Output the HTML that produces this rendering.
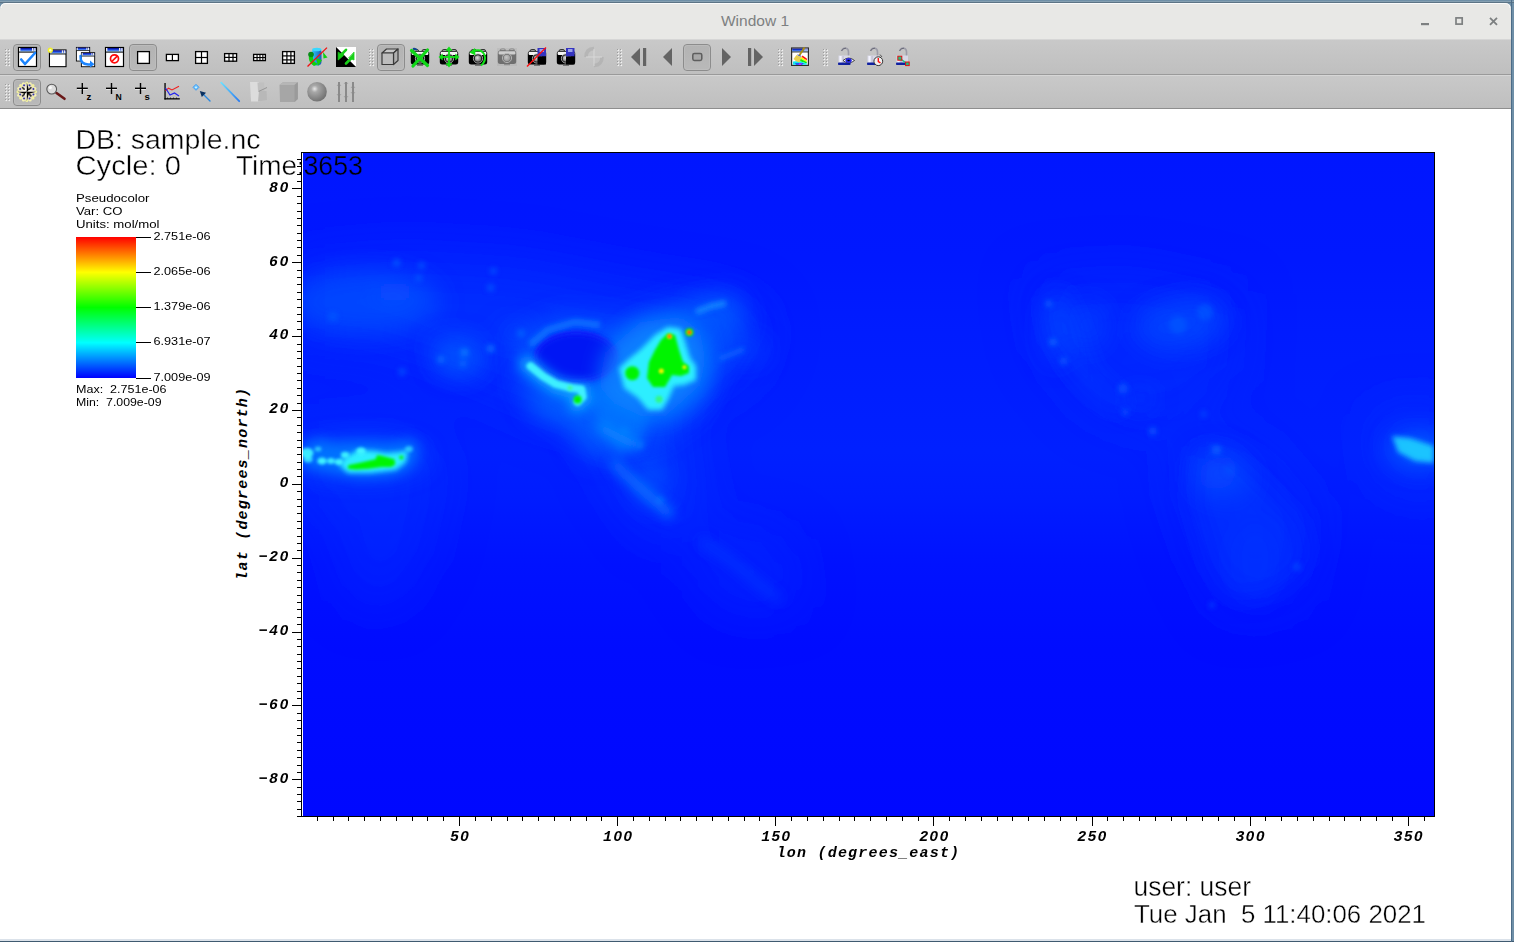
<!DOCTYPE html>
<html><head><meta charset="utf-8">
<style>
html,body{margin:0;padding:0;width:1514px;height:942px;overflow:hidden;background:#6e8ea6;}
svg{position:absolute;left:0;top:0;display:block}
text{font-family:"Liberation Sans",sans-serif}
.thin{stroke:#fff;stroke-width:0.4px}
.thinb{stroke:#0018ff;stroke-width:0.4px}
.ax text{font-family:"Liberation Mono",monospace;font-weight:bold;font-style:italic}
</style></head><body>
<svg width="1514" height="942" viewBox="0 0 1514 942">
<defs>
  <linearGradient id="tbg" x1="0" y1="0" x2="0" y2="1">
    <stop offset="0" stop-color="#c9c9c9"/><stop offset="1" stop-color="#bfbfbf"/>
  </linearGradient>
  <linearGradient id="cbar" x1="0" y1="1" x2="0" y2="0">
    <stop offset="0" stop-color="#0000ff"/><stop offset="0.25" stop-color="#00ffff"/>
    <stop offset="0.5" stop-color="#00ff00"/><stop offset="0.75" stop-color="#ffff00"/>
    <stop offset="1" stop-color="#ff0000"/>
  </linearGradient>
</defs>
<!-- desktop/border -->
<rect x="0" y="0" width="1514" height="942" fill="#6f8fa7"/>
<!-- window -->
<rect x="0" y="1" width="1514" height="1" fill="#86a0b2"/>
<rect x="0" y="2" width="1514" height="1" fill="#5c7486"/>
<path d="M0 9 Q0 3 6 3 L1505 3 Q1511 3 1511 9 L1511 939 L0 939 Z" fill="#e8e8e6"/>
<path d="M1 8 Q1 3.5 6 3.5 L1505 3.5 Q1510 3.5 1510 8" fill="none" stroke="#fbfbfb" stroke-width="1"/>
<text x="755" y="26" text-anchor="middle" font-size="15.5" fill="#7d8081">Window 1</text>
<!-- window controls -->
<rect x="1421" y="23" width="8" height="2.2" fill="#7d8081"/>
<rect x="1456" y="17.9" width="6.2" height="6.2" fill="none" stroke="#7d8081" stroke-width="1.7"/>
<path d="M1490 17.8 L1497 24.8 M1497 17.8 L1490 24.8" stroke="#7d8081" stroke-width="1.8"/>
<!-- toolbars -->
<rect x="0" y="39" width="1511" height="35" fill="url(#tbg)"/>
<rect x="0" y="39" width="1511" height="1" fill="#d6d6d6"/>
<rect x="0" y="74" width="1511" height="1" fill="#9a9a9a"/>
<rect x="0" y="75" width="1511" height="33" fill="url(#tbg)"/>
<rect x="0" y="75" width="1511" height="1" fill="#d6d6d6"/>
<rect x="0" y="108" width="1511" height="1" fill="#8e8e8e"/>
<!-- content -->
<rect x="0" y="109" width="1511" height="830" fill="#ffffff"/>
<rect x="0" y="939" width="1511" height="2" fill="#dbe2ea"/>
<rect x="0" y="941" width="1514" height="1" fill="#3f5a70"/>
<rect x="1511" y="0" width="1" height="942" fill="#4c6c88"/>
<g id="toolbar">
<defs>
  <linearGradient id="tbar" x1="0" y1="0" x2="0" y2="1">
    <stop offset="0" stop-color="#00008c"/><stop offset="0.5" stop-color="#2050e8"/><stop offset="1" stop-color="#80c0ff"/>
  </linearGradient>
  <linearGradient id="pbtn" x1="0" y1="0" x2="0" y2="1">
    <stop offset="0" stop-color="#b3b3b3"/><stop offset="1" stop-color="#b9b9b9"/>
  </linearGradient>
  <radialGradient id="lensg" cx="0.4" cy="0.4" r="0.6">
    <stop offset="0" stop-color="#e0e0e0"/><stop offset="1" stop-color="#707070"/>
  </radialGradient>
  <radialGradient id="sphg" cx="0.38" cy="0.35" r="0.7">
    <stop offset="0" stop-color="#e8e8e8"/><stop offset="0.25" stop-color="#a8a8a8"/><stop offset="1" stop-color="#6e6e6e"/>
  </radialGradient>
  <linearGradient id="lineg" x1="0" y1="0" x2="1" y2="1">
    <stop offset="0" stop-color="#6ce0ff"/><stop offset="1" stop-color="#2a7cf0"/>
  </linearGradient>
  <linearGradient id="cylg" x1="0" y1="0" x2="1" y2="0">
    <stop offset="0" stop-color="#30c8f8"/><stop offset="1" stop-color="#1a58b8"/>
  </linearGradient>
  <g id="grip">
<rect x="0.6" y="0.6" width="1.5" height="1.5" fill="#f2f2f2"/><rect x="0" y="0" width="1" height="1" fill="#9c9c9c"/>
<rect x="3.6" y="0.6" width="1.5" height="1.5" fill="#f2f2f2"/><rect x="3" y="0" width="1" height="1" fill="#9c9c9c"/>
<rect x="0.6" y="3.6" width="1.5" height="1.5" fill="#f2f2f2"/><rect x="0" y="3" width="1" height="1" fill="#9c9c9c"/>
<rect x="3.6" y="3.6" width="1.5" height="1.5" fill="#f2f2f2"/><rect x="3" y="3" width="1" height="1" fill="#9c9c9c"/>
<rect x="0.6" y="6.6" width="1.5" height="1.5" fill="#f2f2f2"/><rect x="0" y="6" width="1" height="1" fill="#9c9c9c"/>
<rect x="3.6" y="6.6" width="1.5" height="1.5" fill="#f2f2f2"/><rect x="3" y="6" width="1" height="1" fill="#9c9c9c"/>
<rect x="0.6" y="9.6" width="1.5" height="1.5" fill="#f2f2f2"/><rect x="0" y="9" width="1" height="1" fill="#9c9c9c"/>
<rect x="3.6" y="9.6" width="1.5" height="1.5" fill="#f2f2f2"/><rect x="3" y="9" width="1" height="1" fill="#9c9c9c"/>
<rect x="0.6" y="12.6" width="1.5" height="1.5" fill="#f2f2f2"/><rect x="0" y="12" width="1" height="1" fill="#9c9c9c"/>
<rect x="3.6" y="12.6" width="1.5" height="1.5" fill="#f2f2f2"/><rect x="3" y="12" width="1" height="1" fill="#9c9c9c"/>
<rect x="0.6" y="15.6" width="1.5" height="1.5" fill="#f2f2f2"/><rect x="0" y="15" width="1" height="1" fill="#9c9c9c"/>
<rect x="3.6" y="15.6" width="1.5" height="1.5" fill="#f2f2f2"/><rect x="3" y="15" width="1" height="1" fill="#9c9c9c"/>
</g>
  <g id="pressed">
    <rect x="0.5" y="0.5" width="27" height="26" rx="3.5" fill="url(#pbtn)" stroke="#8c8c8c" stroke-width="1"/>
    <rect x="1.5" y="1.5" width="25" height="24" rx="2.5" fill="none" stroke="#c2c2c2" stroke-width="0.8" opacity="0.7"/>
  </g>
  <g id="win">
    <!-- 19x20 window: origin top-left -->
    <rect x="0.5" y="0.5" width="18" height="19" fill="#fff" stroke="#000" stroke-width="1.2"/>
    <rect x="1" y="1" width="17" height="3.6" fill="url(#tbar)"/>
    <rect x="1" y="1" width="1.4" height="3.6" fill="#e8e8e8"/>
    <rect x="14" y="1" width="1.4" height="3.6" fill="#e8e8e8"/>
    <rect x="16.2" y="1" width="1.4" height="3.6" fill="#e8e8e8"/>
    <rect x="0.5" y="4.6" width="18" height="1" fill="#000"/>
  </g>
  <g id="camera">
    <!-- 20 wide, origin top-left at y of top bumps -->
    <path d="M3 2.5 Q3 1 5 1 L7 1 Q8.5 1 8.5 2.5 Z M12 2.5 Q12 1 14 1 L16 1 Q17.5 1 17.5 2.5 Z" fill="#fff" stroke="#202020" stroke-width="0.9"/>
    <rect x="0.8" y="2.5" width="18.4" height="13.5" rx="2.5" fill="#000"/>
    <rect x="1.6" y="3.2" width="16.8" height="3.3" rx="1.2" fill="#f4f4f4"/>
    <circle cx="10" cy="10" r="4.6" fill="#111" stroke="#bcbcbc" stroke-width="0.9"/>
    <circle cx="10" cy="10" r="3.2" fill="url(#lensg)"/>
    <rect x="7" y="16" width="6" height="1.2" fill="#555"/>
  </g>
</defs>
<use href="#grip" x="5" y="49"/>
<use href="#pressed" x="13" y="44"/>
<use href="#win" x="18" y="47"/>
<path d="M21.2 59.5 L25 64 L35 53" fill="none" stroke="#1a84ff" stroke-width="2.6" stroke-linecap="round" stroke-linejoin="round"/>
<!-- new window -->
<g transform="translate(49,49.5) scale(0.92,0.88)"><use href="#win"/></g>
<circle cx="50.3" cy="50.2" r="2.6" fill="#f2f22a"/>
<circle cx="50.3" cy="50.2" r="1.2" fill="#ffffc8"/>
<!-- clone window -->
<g transform="translate(76,47) scale(0.74,0.72)"><use href="#win"/></g>
<g transform="translate(81,52.3) scale(0.74,0.74)"><use href="#win"/></g>
<path d="M80.5 56 Q80 64 88 64.5 L91 64.5" fill="none" stroke="#1a84ff" stroke-width="2.4" stroke-linecap="round"/>
<path d="M90 60.5 L94.5 64.3 L90 67.5 Z" fill="#1a84ff"/>
<!-- delete window -->
<use href="#win" x="105" y="47"/>
<circle cx="114.5" cy="58.8" r="4" fill="none" stroke="#ff0a0a" stroke-width="1.7"/>
<path d="M111.8 61.5 L117.2 56.1" stroke="#ff0a0a" stroke-width="1.7"/>
<!-- layouts -->
<use href="#pressed" x="129" y="44"/>
<g fill="#fff" stroke="#000" stroke-width="1.3">
  <rect x="137.6" y="51.6" width="11.8" height="11.8"/>
  <rect x="166.4" y="54.4" width="12" height="6.2"/>
  <rect x="195.6" y="51.6" width="11.8" height="11.8"/>
  <rect x="224.6" y="53.6" width="12" height="7.6"/>
  <rect x="253.6" y="54.4" width="11.8" height="6.2"/>
  <rect x="282.6" y="51.6" width="11.8" height="11.8"/>
</g>
<g fill="#000">
  <rect x="171.8" y="54" width="1.2" height="7"/>
  <rect x="200.9" y="51" width="1.2" height="13"/><rect x="195" y="56.9" width="13" height="1.2"/>
  <rect x="228.4" y="53" width="1.2" height="8.8"/><rect x="232.4" y="53" width="1.2" height="8.8"/><rect x="224" y="56.8" width="13" height="1.2"/>
  <rect x="256.5" y="54" width="1.1" height="7"/><rect x="259.4" y="54" width="1.1" height="7"/><rect x="262.3" y="54" width="1.1" height="7"/><rect x="253" y="57" width="13" height="1.1"/>
  <rect x="286.3" y="51" width="1.2" height="13"/><rect x="290.3" y="51" width="1.2" height="13"/><rect x="282" y="55.3" width="13" height="1.2"/><rect x="282" y="59.3" width="13" height="1.2"/>
</g>
<!-- spin icon -->
<rect x="312" y="48.5" width="9.5" height="17" rx="4" fill="url(#cylg)"/>
<ellipse cx="316.8" cy="49.5" rx="4.7" ry="1.8" fill="#38d8ff"/>
<g fill="#10d010">
  <path d="M309 55 Q307.5 62 314 66 L318 64 Q312 61 313 56 Z"/>
  <circle cx="311" cy="54.5" r="2.8" fill="#0a8a1a"/>
  <path d="M323 52 L327.5 57.5 L323.5 58.5 Z"/>
  <path d="M316 58 L322 60 L318 66 Z"/>
</g>
<path d="M307.5 66.5 L327 47.6" stroke="#f01010" stroke-width="1.3"/>
<!-- black/white swap -->
<path d="M336 47 L356 47 L356 67 Z" fill="#fff"/>
<path d="M336 47 L356 67 L336 67 Z" fill="#000"/>
<g stroke="#18d018" stroke-width="2.6" fill="#18d018" stroke-linecap="round">
  <path d="M346 49.8 L341 55" fill="none"/>
  <path d="M338.2 52.5 L338.2 60 L343.5 55.5 Z" stroke-width="0.8" stroke-linejoin="round"/>
  <path d="M346 63.5 L351 58.5" fill="none"/>
  <path d="M354 52.5 L354 60 L349 58 Z" stroke-width="0.8" stroke-linejoin="round"/>
</g>
<!-- grip 2 -->
<use href="#grip" x="369" y="49"/>
<use href="#pressed" x="377" y="44"/>
<!-- cube -->
<g fill="none" stroke="#3a3a3a" stroke-width="1.2" stroke-linejoin="round">
  <path d="M382 53 L386.5 49 L398 49 L393.5 53 Z" fill="#c8c8c8"/>
  <path d="M393.5 53 L398 49 L398 60.5 L393.5 64.5 Z" fill="#b0b0b0"/>
  <rect x="382" y="53" width="11.5" height="11.5" fill="#bdbdbd"/>
</g>
<!-- cameras -->
<use href="#camera" x="410" y="48.5"/>
<g stroke="#10d818" stroke-width="3.2" stroke-linecap="round">
  <path d="M411.5 50.5 L427.5 65.5"/><path d="M427.5 50 L413 66"/>
</g>
<path d="M413 49 Q415 48 417 50" stroke="#104890" stroke-width="2" fill="none"/>
<use href="#camera" x="439" y="48.5"/>
<g fill="#10e018" stroke="#10e018">
  <path d="M449 49 L449 65.5" stroke-width="1.8"/>
  <path d="M440.5 57 L457.5 57" stroke-width="1.8"/>
  <path d="M449 46.8 L452 50.5 L446 50.5 Z" stroke-width="0.5"/>
  <path d="M449 67.2 L452 63.5 L446 63.5 Z" stroke-width="0.5"/>
  <path d="M438.8 57 L442.5 54 L442.5 60 Z" stroke-width="0.5"/>
  <path d="M459.2 57 L455.5 54 L455.5 60 Z" stroke-width="0.5"/>
</g>
<use href="#camera" x="468" y="48.5"/>
<path d="M473 51.5 Q481 48 484.5 55 Q486.5 61 481 65.5" fill="none" stroke="#10e018" stroke-width="2"/>
<path d="M469.5 52.5 L475 48 L475.5 55.5 Z" fill="#10e018"/>
<g opacity="0.55"><use href="#camera" x="497" y="48"/></g>
<rect x="497" y="48" width="20" height="18" fill="#a8a8a8" opacity="0.3"/>
<use href="#camera" x="527" y="48.5"/>
<rect x="537.5" y="48" width="8.5" height="8.5" fill="#3434c0"/>
<rect x="539.5" y="49" width="4.5" height="3" fill="#9aa0e8"/>
<rect x="537.5" y="56.5" width="8.5" height="8" fill="#000"/>
<path d="M527 66.6 L546 47.4" stroke="#ff1010" stroke-width="1.4"/>
<use href="#camera" x="556" y="48.5"/>
<rect x="566" y="48" width="8.5" height="8.5" fill="#3434c0"/>
<rect x="568" y="49" width="4.5" height="3" fill="#9aa0e8"/>
<rect x="566" y="56.5" width="8.5" height="8" fill="#000"/>
<!-- disabled crosshair -->
<g opacity="0.5">
  <path d="M586 57 Q586 49 594 48.5 M602 57 Q602 65 594 65.5" stroke="#a8a8a8" stroke-width="3.5" fill="none"/>
  <path d="M594 49 L594 66 M586 57 L602 57" stroke="#f0f0f0" stroke-width="0.9"/>
</g>
<!-- grip 3 -->
<use href="#grip" x="617" y="49"/>
<!-- animation -->
<g fill="#646464">
  <path d="M631 57 L640 48 L640 66 Z"/><rect x="643" y="48" width="3.2" height="18"/>
  <path d="M663 57 L672 48 L672 66 Z"/>
  <path d="M731 57 L722 48 L722 66 Z"/>
  <rect x="748" y="48" width="3.2" height="18"/><path d="M763 57 L754 48 L754 66 Z"/>
</g>
<use href="#pressed" x="683" y="44"/>
<rect x="692.8" y="53.4" width="9" height="7" rx="1.6" fill="#a8a8a8" stroke="#5e5e5e" stroke-width="1.5"/>
<!-- grip 4 -->
<use href="#grip" x="778" y="49"/>
<!-- color table icon -->
<rect x="791.6" y="48" width="16.8" height="17.4" fill="#fff" stroke="#2c2c2c" stroke-width="1.2"/>
<rect x="792.2" y="48.6" width="15.6" height="3" fill="url(#tbar)"/>
<rect x="804.5" y="48.6" width="1.1" height="3" fill="#e8e8e8"/><rect x="806.4" y="48.6" width="1.1" height="3" fill="#e8e8e8"/>
<rect x="791.6" y="51.5" width="16.8" height="0.9" fill="#1a1a1a"/>
<path d="M802 53 Q805 56 807.5 59 L807.5 64.5 L795 64.5 Q794 62 794 61" fill="none" stroke="url(#rainb)" stroke-width="0"/>
<g>
  <path d="M802.5 55.5 L806.8 58.5 L806.8 60.5 L801.5 57 Z" fill="#ff1010"/>
  <path d="M801.5 57 L806.8 60.5 L806.8 62 L800.5 58.8 Z" fill="#f8f800"/>
  <path d="M800.5 58.8 L806.8 62 L806.8 63.5 L799 61 Z" fill="#10f010"/>
  <path d="M793 61.5 L799 61 L806.8 63.5 L806.8 64.8 L793 64.8 Z" fill="#10e8f0"/>
  <path d="M795 63.2 L804 63.2 L802 64.8 L796 64.8 Z" fill="#2030ff"/>
  <path d="M799 63.5 L802 63.5 L801 64.8 L798.5 64.8 Z" fill="#ff10ff"/>
</g>
<path d="M804.5 47.5 L799 56" stroke="#b09010" stroke-width="1.8"/>
<path d="M796.5 55 L801.5 57 L799.5 62.5 Q796 62 793.5 59 Z" fill="#e8d050"/>
<path d="M797.5 54.8 L801.2 56.3" stroke="#5060c0" stroke-width="1"/>
<!-- grip 5 -->
<use href="#grip" x="823" y="49"/>
<!-- locks -->
<g id="lockbase">
</g>
</g>
<g id="toolbar2">
<defs>
  <g id="lock">
    <!-- origin at left-top of icon (approx 17x18) -->
    <path d="M3.5 4 Q5 0.8 8 1.2 Q10.5 1.8 10.5 5 L10.5 9" fill="none" stroke="#9c9ca8" stroke-width="1.6"/>
    <path d="M3.5 4 Q5 0.8 8 1.2" fill="none" stroke="#6a6a78" stroke-width="1"/>
    <rect x="0.5" y="8.5" width="11.5" height="8" fill="#d8d8e6"/>
    <rect x="1.5" y="9" width="2" height="7" fill="#f4f4ff"/>
    <rect x="4.5" y="9" width="1.2" height="7" fill="#c0c0d4"/>
    <rect x="0" y="15.5" width="12.5" height="2.6" rx="0.8" fill="#1020a0"/>
  </g>
</defs>
<use href="#lock" x="838" y="47"/>
<!-- eye -->
<path d="M843 60.5 Q848.5 55.5 854.5 60.5 Q848.5 65.5 843 60.5 Z" fill="#fff" stroke="#222" stroke-width="0.8"/>
<ellipse cx="848.6" cy="60.5" rx="3.2" ry="2.5" fill="#2828e0"/>
<ellipse cx="848.6" cy="60.5" rx="1.2" ry="0.8" fill="#000"/>
<use href="#lock" x="867" y="47"/>
<!-- clock -->
<circle cx="878.3" cy="61.2" r="4.4" fill="#f0f0f0" stroke="#333" stroke-width="1"/>
<path d="M878.3 58 L878.3 61.5 L880.5 62.8" stroke="#ff1010" stroke-width="1.4" fill="none"/>
<path d="M880 54.5 L882 57" stroke="#555" stroke-width="1"/>
<use href="#lock" x="896" y="47"/>
<path d="M900 58.5 L907.3 63.8" stroke="#20c080" stroke-width="1.5"/>
<rect x="897.8" y="56.2" width="4" height="4" fill="#20c080" stroke="#e01010" stroke-width="1"/>
<rect x="905.6" y="62" width="3.6" height="3.6" fill="#20c080" stroke="#e01010" stroke-width="1"/>

<!-- toolbar 2 -->
<use href="#grip" x="5" y="84"/>
<use href="#pressed" x="13" y="79"/>
<!-- compass -->
<g>
<circle cx="26.8" cy="91.8" r="9.2" fill="#e4dcc0"/>
<circle cx="26.80" cy="83.00" r="1.5" fill="#f2f0a0"/>
<circle cx="30.17" cy="83.67" r="1.5" fill="#f6f2b0"/>
<circle cx="33.02" cy="85.58" r="1.5" fill="#f2f0a0"/>
<circle cx="34.93" cy="88.43" r="1.5" fill="#f6f2b0"/>
<circle cx="35.60" cy="91.80" r="1.5" fill="#f2f0a0"/>
<circle cx="34.93" cy="95.17" r="1.5" fill="#f6f2b0"/>
<circle cx="33.02" cy="98.02" r="1.5" fill="#f2f0a0"/>
<circle cx="30.17" cy="99.93" r="1.5" fill="#f6f2b0"/>
<circle cx="26.80" cy="100.60" r="1.5" fill="#f2f0a0"/>
<circle cx="23.43" cy="99.93" r="1.5" fill="#f6f2b0"/>
<circle cx="20.58" cy="98.02" r="1.5" fill="#f2f0a0"/>
<circle cx="18.67" cy="95.17" r="1.5" fill="#f6f2b0"/>
<circle cx="18.00" cy="91.80" r="1.5" fill="#f2f0a0"/>
<circle cx="18.67" cy="88.43" r="1.5" fill="#f6f2b0"/>
<circle cx="20.58" cy="85.58" r="1.5" fill="#f2f0a0"/>
<circle cx="23.43" cy="83.67" r="1.5" fill="#f6f2b0"/>
<circle cx="29.56" cy="85.15" r="1" fill="#3838b0"/>
<circle cx="33.45" cy="89.04" r="1" fill="#3838b0"/>
<circle cx="33.45" cy="94.56" r="1" fill="#3838b0"/>
<circle cx="29.56" cy="98.45" r="1" fill="#3838b0"/>
<circle cx="24.04" cy="98.45" r="1" fill="#3838b0"/>
<circle cx="20.15" cy="94.56" r="1" fill="#3838b0"/>
<circle cx="20.15" cy="89.04" r="1" fill="#3838b0"/>
<circle cx="24.04" cy="85.15" r="1" fill="#3838b0"/>
<path d="M26.8 91.8 L31.40 87.20" stroke="#303030" stroke-width="1.6"/>
<path d="M26.8 91.8 L31.40 96.40" stroke="#303030" stroke-width="1.6"/>
<path d="M26.8 91.8 L22.20 96.40" stroke="#303030" stroke-width="1.6"/>
<path d="M26.8 91.8 L22.20 87.20" stroke="#303030" stroke-width="1.6"/>
<path d="M26.8 82.6 L24.8 89.8 L26.8 91.8 Z M17.6 91.8 L24.8 89.8 L26.8 91.8 Z M26.8 101.0 L24.8 93.8 L26.8 91.8 Z M36.0 91.8 L28.8 89.8 L26.8 91.8 Z" fill="#fbf8ee"/>
<path d="M26.8 82.6 L28.8 89.8 L26.8 91.8 Z M17.6 91.8 L24.8 93.8 L26.8 91.8 Z M26.8 101.0 L28.8 93.8 L26.8 91.8 Z M36.0 91.8 L28.8 93.8 L26.8 91.8 Z" fill="#000"/>
</g>
<!-- magnifier -->
<path d="M56.5 93 L64.5 98.8" stroke="#6a1818" stroke-width="2.6" stroke-linecap="round"/>
<circle cx="51.7" cy="89.1" r="4.9" fill="#dcdcdc" stroke="#585858" stroke-width="1.1"/>
<circle cx="50.3" cy="87.6" r="1.6" fill="#f8f8f8"/>
<!-- +z +N +S -->
<g fill="#000">
  <rect x="76.8" y="87.6" width="11" height="1.4"/><rect x="81.6" y="83" width="1.4" height="11"/>
  <rect x="106" y="87.6" width="11" height="1.4"/><rect x="110.8" y="83" width="1.4" height="11"/>
  <rect x="135" y="87.6" width="11" height="1.4"/><rect x="139.8" y="83" width="1.4" height="11"/>
</g>
<g fill="#fff" opacity="0.8">
  <rect x="77" y="89" width="4.6" height="0.8"/><rect x="83" y="89" width="4.6" height="0.8"/>
  <rect x="106.2" y="89" width="4.6" height="0.8"/><rect x="112.2" y="89" width="4.6" height="0.8"/>
  <rect x="135.2" y="89" width="4.6" height="0.8"/><rect x="141.2" y="89" width="4.6" height="0.8"/>
</g>
<text x="86.6" y="100.2" font-size="9.6" font-weight="bold" style="font-family:'Liberation Sans'">z</text>
<text x="115.6" y="100.2" font-size="8.6" font-weight="bold" style="font-family:'Liberation Sans'">N</text>
<text x="144.6" y="100.2" font-size="9.6" font-weight="bold" style="font-family:'Liberation Sans'">s</text>
<!-- curve icon -->
<g>
  <rect x="164.4" y="83" width="1.3" height="16.5" fill="#000"/>
  <rect x="164.4" y="98.2" width="15.4" height="1.3" fill="#000"/>
  <g fill="#000"><rect x="167" y="97.6" width="0.8" height="1"/><rect x="170" y="97.6" width="0.8" height="1"/><rect x="173" y="97.6" width="0.8" height="1"/><rect x="176" y="97.6" width="0.8" height="1"/></g>
  <path d="M165.5 90.8 L168.5 88.2 L172 90 L179 86.3" fill="none" stroke="#f02020" stroke-width="1.1"/>
  <path d="M165.5 88 L170 95 L174.5 93 L179 96" fill="none" stroke="#2020f0" stroke-width="1.1"/>
</g>
<!-- pick -->
<path d="M196 84.3 L199 87.3 L196 90.3 L193 87.3 Z" fill="#6cc8ff" stroke="#3890f0" stroke-width="0.8"/>
<circle cx="196" cy="87.3" r="0.9" fill="#e8f8ff"/>
<path d="M203 94 L210 101" stroke="#2a88e0" stroke-width="1.4" stroke-linecap="round"/>
<path d="M199.8 91 L206 92.8 L201.8 97 Z" fill="#0a3060"/>
<!-- line -->
<path d="M221.2 82.6 L239.2 101.2" stroke="url(#lineg)" stroke-width="1.8" stroke-linecap="round"/>
<!-- plane (disabled) -->
<g opacity="0.95">
  <path d="M250 82 L259 82 L259.5 101.5 L251 101.5 Z" fill="#dedede"/>
  <path d="M257.5 82.5 L264 82.5 L264.5 91 L258 91 Z" fill="#c0c0c0"/>
  <path d="M258 101.5 L267 100 L266.5 91 L259 91 Z" fill="#b8b8b8"/>
  <path d="M258.5 91.5 L267 87.5" stroke="#909090" stroke-width="0.9"/>
</g>
<!-- box (disabled) -->
<path d="M279.5 85 L283 82.3 L297.8 82.3 L297.8 99 L294.5 102 L280 102 Z" fill="#a6a6a6"/>
<path d="M279.5 85 L283 82.3 L297.8 82.3 L294.5 85 Z" fill="#b6b6b6"/>
<path d="M294.5 85 L297.8 82.3 L297.8 99 L294.5 102 Z" fill="#9a9a9a"/>
<!-- sphere -->
<circle cx="317" cy="91.8" r="9.8" fill="url(#sphg)"/>
<!-- sliders -->
<g fill="#8a8a8a">
  <rect x="338" y="82" width="2" height="20"/><rect x="345" y="82" width="2" height="20"/><rect x="352" y="82" width="2" height="20"/>
  <path d="M336.5 85.5 L341.5 85.5 L339 84 Z M336.5 94.5 L341.5 94.5 L339 96 Z"/>
  <path d="M343.5 83.5 L348.5 83.5 L346 82 Z M343.5 96.5 L348.5 96.5 L346 98 Z"/>
  <path d="M350.5 87.5 L355.5 87.5 L353 86 Z M350.5 92.5 L355.5 92.5 L353 94 Z"/>
</g>
</g>

<g id="plot">
  <defs>
    <linearGradient id="mapbg" x1="0" y1="153" x2="0" y2="816" gradientUnits="userSpaceOnUse">
      <stop offset="0" stop-color="#0016ff"/>
      <stop offset="0.16" stop-color="#0018ff"/>
      <stop offset="0.27" stop-color="#001cff"/>
      <stop offset="0.45" stop-color="#0020ff"/>
      <stop offset="0.52" stop-color="#001cff"/>
      <stop offset="0.62" stop-color="#0012ff"/>
      <stop offset="0.75" stop-color="#000cff"/>
      <stop offset="1" stop-color="#0008ff"/>
    </linearGradient>
    <clipPath id="mapclip"><rect x="303" y="153" width="1131" height="663"/></clipPath>
    <filter id="b30" x="-50%" y="-50%" width="200%" height="200%"><feGaussianBlur stdDeviation="26"/></filter>
    <filter id="b14" x="-50%" y="-50%" width="200%" height="200%"><feGaussianBlur stdDeviation="12"/></filter>
    <filter id="b7" x="-50%" y="-50%" width="200%" height="200%"><feGaussianBlur stdDeviation="6"/></filter>
    <filter id="b10" x="-50%" y="-50%" width="200%" height="200%"><feGaussianBlur stdDeviation="10"/></filter>
    <filter id="b4" x="-50%" y="-50%" width="200%" height="200%"><feGaussianBlur stdDeviation="2.8"/></filter>
    <filter id="b25" x="-50%" y="-50%" width="200%" height="200%"><feGaussianBlur stdDeviation="1.8"/></filter>
    <filter id="b15" x="-50%" y="-50%" width="200%" height="200%"><feGaussianBlur stdDeviation="1.3"/></filter>
  </defs>
  <rect x="303" y="153" width="1131" height="663" fill="url(#mapbg)"/>
  <g clip-path="url(#mapclip)">
<g filter="url(#b30)">
<path d="M290.0 265.0 L400.0 255.0 L520.0 262.0 L640.0 285.0 L740.0 300.0 L770.0 330.0 L740.0 380.0 L650.0 420.0 L560.0 420.0 L470.0 380.0 L380.0 345.0 L290.0 340.0 Z" fill="#0838ff" opacity="0.55"/>
<path d="M290.0 430.0 L420.0 425.0 L445.0 470.0 L425.0 560.0 L390.0 610.0 L350.0 600.0 L330.0 520.0 L290.0 495.0 Z" fill="#0838ff" opacity="0.35"/>
<path d="M590.0 400.0 L680.0 410.0 L700.0 500.0 L660.0 540.0 L610.0 470.0 Z" fill="#0a44ff" opacity="0.55"/>
<path d="M690.0 520.0 L790.0 540.0 L805.0 605.0 L730.0 615.0 L690.0 565.0 Z" fill="#0a38ff" opacity="0.4"/>
<path d="M1030.0 280.0 L1130.0 272.0 L1240.0 295.0 L1235.0 380.0 L1165.0 430.0 L1095.0 410.0 L1045.0 350.0 Z" fill="#0a34ff" opacity="0.5"/>
<path d="M1175.0 435.0 L1255.0 440.0 L1320.0 515.0 L1300.0 600.0 L1230.0 615.0 L1200.0 560.0 L1178.0 495.0 Z" fill="#0a34ff" opacity="0.5"/>
<path d="M1370.0 415.0 L1450.0 410.0 L1450.0 490.0 L1385.0 480.0 Z" fill="#0a40ff" opacity="0.55"/>
</g>
<g filter="url(#b14)">
<ellipse cx="365" cy="302" rx="75" ry="32" fill="#0a68ff" opacity="0.45"/>
<ellipse cx="395" cy="292" rx="22" ry="12" fill="#0a54ff" opacity="0.4"/>
<ellipse cx="460" cy="357" rx="26" ry="16" fill="#0a5cff" opacity="0.5"/>
<ellipse cx="515" cy="332" rx="18" ry="9" fill="#0a58ff" opacity="0.45"/>
<ellipse cx="600" cy="430" rx="28" ry="30" fill="#0a70ff" opacity="0.5"/>
<ellipse cx="560" cy="405" rx="32" ry="16" fill="#0a80ff" opacity="0.5"/>
<ellipse cx="650" cy="480" rx="16" ry="26" fill="#0a70ff" opacity="0.4"/>
<ellipse cx="1090" cy="325" rx="16" ry="24" fill="#0a50ff" opacity="0.45"/>
<ellipse cx="1185" cy="322" rx="42" ry="22" fill="#0a54ff" opacity="0.4"/>
<ellipse cx="1215" cy="470" rx="22" ry="20" fill="#0a58ff" opacity="0.45"/>
<ellipse cx="1140" cy="398" rx="16" ry="9" fill="#0a50ff" opacity="0.35"/>
<ellipse cx="360" cy="458" rx="65" ry="18" fill="#0a90ff" opacity="0.45"/>
<ellipse cx="1420" cy="450" rx="32" ry="16" fill="#0a90ff" opacity="0.5"/>
<ellipse cx="745" cy="350" rx="22" ry="12" fill="#0a60ff" opacity="0.4"/>
<ellipse cx="712" cy="312" rx="25" ry="12" fill="#0a70ff" opacity="0.45"/>
<ellipse cx="660" cy="368" rx="50" ry="45" fill="#0a90ff" opacity="0.6"/>
<ellipse cx="1255" cy="560" rx="25" ry="40" fill="#0a48ff" opacity="0.2"/>
<ellipse cx="1225" cy="478" rx="28" ry="22" fill="#0a58ff" opacity="0.45"/>
<ellipse cx="1055" cy="330" rx="12" ry="35" fill="#0a58ff" opacity="0.4"/>
</g>
<g filter="url(#b4)">
<circle cx="396.6" cy="262.8" r="4" fill="#0a70ff" opacity="0.5"/>
<circle cx="421.5" cy="265.6" r="3.5" fill="#0a70ff" opacity="0.5"/>
<circle cx="418.8" cy="278" r="3.5" fill="#0a70ff" opacity="0.45"/>
<circle cx="493.4" cy="271" r="3.5" fill="#0a70ff" opacity="0.45"/>
<circle cx="490.6" cy="287.7" r="4" fill="#0a70ff" opacity="0.45"/>
<circle cx="333" cy="316.7" r="5" fill="#0a70ff" opacity="0.35"/>
<circle cx="440.9" cy="359.5" r="4" fill="#1088ff" opacity="0.55"/>
<circle cx="464.4" cy="352.6" r="4.5" fill="#10a0ff" opacity="0.6"/>
<circle cx="463" cy="363.6" r="3.5" fill="#1090ff" opacity="0.5"/>
<circle cx="490.6" cy="348.5" r="4" fill="#1090ff" opacity="0.55"/>
<circle cx="402" cy="372" r="4" fill="#0a70ff" opacity="0.4"/>
<circle cx="521" cy="333.3" r="4" fill="#0a80ff" opacity="0.5"/>
<circle cx="1048.8" cy="303.7" r="3.5" fill="#1080ff" opacity="0.55"/>
<circle cx="1053" cy="341.9" r="4" fill="#1080ff" opacity="0.55"/>
<circle cx="1063.7" cy="361" r="4" fill="#1070ff" opacity="0.5"/>
<circle cx="1123" cy="388.6" r="5" fill="#1070ff" opacity="0.5"/>
<circle cx="1125.2" cy="411.9" r="3.5" fill="#1070ff" opacity="0.45"/>
<circle cx="1152.8" cy="431" r="4" fill="#1070ff" opacity="0.5"/>
<circle cx="1203.7" cy="414" r="3.5" fill="#0a60ff" opacity="0.4"/>
<circle cx="1178" cy="325" r="9" fill="#0a70ff" opacity="0.45"/>
<circle cx="1205" cy="312" r="8" fill="#0a70ff" opacity="0.45"/>
<circle cx="1216.5" cy="450" r="5" fill="#1080ff" opacity="0.55"/>
<circle cx="1230" cy="470" r="6" fill="#0a60ff" opacity="0.4"/>
<circle cx="1297" cy="566.8" r="4" fill="#0a70ff" opacity="0.45"/>
<circle cx="1212" cy="605" r="3" fill="#0a70ff" opacity="0.4"/>
<circle cx="625" cy="430" r="5" fill="#10a0ff" opacity="0.5"/>
<circle cx="640" cy="445" r="4" fill="#1090ff" opacity="0.45"/>
<circle cx="660" cy="500" r="4" fill="#1080ff" opacity="0.4"/>
</g>
<g filter="url(#b14)">
<path d="M515.0 335.0 L560.0 315.0 L620.0 320.0 L680.0 300.0 L735.0 292.0 L750.0 320.0 L720.0 370.0 L700.0 410.0 L660.0 440.0 L610.0 450.0 L560.0 425.0 L520.0 395.0 Z" fill="#0a64ff" opacity="0.6"/>
</g>
<g filter="url(#b7)">
<path d="M600.0 380.0 L630.0 390.0 L650.0 415.0 L640.0 445.0 L620.0 455.0 L600.0 430.0 L590.0 400.0 Z" fill="#0a80ff" opacity="0.6"/>
<path d="M612.0 462.0 L640.0 488.0 L672.0 516.0" stroke="#10a0ff" stroke-width="9" fill="none" opacity="0.6"/>
<path d="M597.0 426.0 L620.0 438.0 L640.0 447.0" stroke="#10a0ff" stroke-width="8" fill="none" opacity="0.55"/>
<path d="M700.0 540.0 L730.0 560.0 L760.0 585.0 L780.0 600.0" stroke="#0a60ff" stroke-width="9" fill="none" opacity="0.3"/>
</g>
<g filter="url(#b14)">
<path d="M430.0 340.0 L470.0 338.0 L482.0 360.0 L470.0 378.0 L440.0 372.0 Z" fill="#0a60ff" opacity="0.5"/>
<path d="M1045.0 300.0 L1060.0 290.0 L1075.0 320.0 L1090.0 370.0 L1105.0 385.0 L1130.0 405.0 L1115.0 410.0 L1085.0 385.0 L1055.0 340.0 Z" fill="#0a50ff" opacity="0.4"/>
<path d="M1140.0 310.0 L1200.0 295.0 L1225.0 310.0 L1205.0 345.0 L1160.0 355.0 L1130.0 335.0 Z" fill="#0a50ff" opacity="0.4"/>
<path d="M1195.0 445.0 L1230.0 450.0 L1260.0 480.0 L1300.0 520.0 L1310.0 560.0 L1280.0 590.0 L1230.0 600.0 L1210.0 570.0 L1190.0 500.0 Z" fill="#0a40ff" opacity="0.35"/>
</g>
<ellipse cx="576" cy="357" rx="43" ry="27" fill="#0a22fa" filter="url(#b4)"/>
<ellipse cx="576" cy="357" rx="38" ry="22" fill="#0418f4" filter="url(#b4)"/>
<g filter="url(#b7)">
<path d="M303.0 444.0 L318.0 438.0 L335.0 444.0 L360.0 443.0 L390.0 444.0 L412.0 438.0 L420.0 448.0 L410.0 468.0 L392.0 476.0 L360.0 478.0 L335.0 472.0 L303.0 466.0 Z" fill="#0a90ff" opacity="0.55"/>
</g>
<g filter="url(#b10)">
<path d="M605.0 352.0 L640.0 322.0 L680.0 316.0 L700.0 330.0 L706.0 360.0 L700.0 386.0 L680.0 404.0 L666.0 416.0 L640.0 416.0 L614.0 404.0 L598.0 386.0 Z" fill="#0a88ff" opacity="0.75"/>
</g>
<g filter="url(#b7)">
<path d="M527.0 364.0 L543.0 377.0 L556.0 386.0 L571.0 390.0 L583.0 391.0 L584.0 398.0 L577.0 404.0" stroke="#10b0ff" stroke-width="16" fill="none" stroke-linecap="round" opacity="0.85"/>
</g>
<g filter="url(#b4)">
<path d="M344.0 458.0 L358.0 450.0 L375.0 451.0 L386.0 453.0 L399.0 452.0 L408.0 450.0 L406.0 462.0 L396.0 470.0 L370.0 473.0 L348.0 473.0 L340.0 466.0 Z" fill="#30f4ff" opacity="0.95"/>
</g><g filter="url(#b25)">
<ellipse cx="307" cy="453" rx="6.5" ry="5" fill="#40f8ff" opacity="0.9"/>
<ellipse cx="308" cy="459" rx="4.55" ry="3.5" fill="#40f8ff" opacity="0.8"/>
<ellipse cx="322" cy="461" rx="4.680000000000001" ry="3.6" fill="#40f8ff" opacity="0.95"/>
<ellipse cx="331" cy="461" rx="3.9000000000000004" ry="3" fill="#40f8ff" opacity="0.9"/>
<ellipse cx="339" cy="462" rx="4.16" ry="3.2" fill="#40f8ff" opacity="0.95"/>
<ellipse cx="345" cy="455" rx="4.16" ry="3.2" fill="#40f8ff" opacity="0.9"/>
<ellipse cx="361" cy="451" rx="4.680000000000001" ry="3.6" fill="#40f8ff" opacity="0.95"/>
<ellipse cx="409" cy="449" rx="3.9000000000000004" ry="3" fill="#40f8ff" opacity="0.6"/>
<ellipse cx="318" cy="449" rx="3.3800000000000003" ry="2.6" fill="#40f8ff" opacity="0.6"/>
</g><g filter="url(#b4)">
<path d="M640.0 350.0 L655.0 335.0 L668.0 327.0 L681.0 329.0 L686.0 345.0 L690.0 358.0 L696.0 366.0 L696.0 380.0 L684.0 385.0 L674.0 386.0 L668.0 400.0 L662.0 410.0 L648.0 410.0 L638.0 398.0 L624.0 388.0 L619.0 368.0 L630.0 358.0 Z" fill="#30f4ff" opacity="0.95"/>
<path d="M1392.0 436.0 L1410.0 438.0 L1434.0 446.0 L1434.0 463.0 L1415.0 461.0 L1398.0 452.0 Z" fill="#20d8ff" opacity="0.85"/>
<path d="M696.0 312.0 L712.0 306.0 L726.0 303.0" stroke="#20a8ff" stroke-width="6" fill="none" opacity="0.6"/>
<path d="M719.0 359.0 L732.0 354.0 L744.0 349.0" stroke="#1880ff" stroke-width="5" fill="none" opacity="0.5"/>
<path d="M530.0 345.0 L548.0 330.0 L575.0 322.0 L600.0 325.0" stroke="#1890ff" stroke-width="7" fill="none" opacity="0.55"/>
</g>
<g filter="url(#b25)">
<path d="M530.5 366.2 L543.2 376.4 L556.0 384.0 L571.2 387.9 L581.4 389.2 L582.7 396.8 L577.6 402.0" stroke="#40f4ff" stroke-width="8" fill="none" stroke-linecap="round" stroke-linejoin="round" opacity="0.95"/>
</g>
<g filter="url(#b25)" fill="#00f400">
<path d="M348.1 465.3 L360.1 462.8 L375.5 459.3 L377.3 455.0 L382.4 455.9 L394.4 459.3 L395.3 464.5 L391.0 467.1 L381.5 467.1 L368.7 468.8 L355.8 469.6 L348.1 468.8 Z"/>
<circle cx="401.3" cy="457.6" r="2"/>
<path d="M661.0 340.0 L668.0 333.0 L675.0 335.0 L679.0 350.0 L683.0 362.0 L689.0 366.0 L689.0 373.0 L681.0 376.0 L672.0 375.0 L665.0 387.0 L653.0 387.0 L647.0 378.0 L649.0 362.0 L655.0 350.0 Z"/>
<circle cx="632.3" cy="373.2" r="7"/>
<circle cx="577.6" cy="399.4" r="4"/>
<circle cx="570" cy="388" r="2.5" fill="#40f8a0"/>
<circle cx="659" cy="399.2" r="3.5" fill="#30f880"/>
<circle cx="689.3" cy="332.3" r="4"/>
</g>
<g filter="url(#b15)">
<circle cx="669.5" cy="336.4" r="2.6" fill="#ffd000"/>
<circle cx="669.5" cy="336.4" r="1.4" fill="#ff1000"/>
<circle cx="689.3" cy="332.3" r="2.6" fill="#ffb000"/>
<circle cx="689.3" cy="332.3" r="1.5" fill="#ff0000"/>
<circle cx="661.3" cy="371" r="2.6" fill="#f0f000"/>
<circle cx="684.4" cy="367.3" r="2.2" fill="#d0f000"/>
</g>
</g>
</g>
<g id="axes" fill="#000">
<rect x="301" y="152" width="1134" height="1"/>
<rect x="301" y="152" width="1" height="665"/>
<rect x="302" y="153" width="1" height="663" fill="#fff"/>
<rect x="1434" y="152" width="1" height="665"/>
<rect x="301" y="816" width="1134" height="1"/>
<rect x="297" y="816" width="4" height="1"/>
<rect x="297" y="809" width="4" height="1"/>
<rect x="297" y="801" width="4" height="1"/>
<rect x="297" y="794" width="4" height="1"/>
<rect x="297" y="787" width="4" height="1"/>
<rect x="292" y="779" width="9" height="1"/>
<rect x="297" y="772" width="4" height="1"/>
<rect x="297" y="765" width="4" height="1"/>
<rect x="297" y="757" width="4" height="1"/>
<rect x="297" y="750" width="4" height="1"/>
<rect x="297" y="742" width="4" height="1"/>
<rect x="297" y="735" width="4" height="1"/>
<rect x="297" y="728" width="4" height="1"/>
<rect x="297" y="720" width="4" height="1"/>
<rect x="297" y="713" width="4" height="1"/>
<rect x="292" y="705" width="9" height="1"/>
<rect x="297" y="698" width="4" height="1"/>
<rect x="297" y="691" width="4" height="1"/>
<rect x="297" y="683" width="4" height="1"/>
<rect x="297" y="676" width="4" height="1"/>
<rect x="297" y="668" width="4" height="1"/>
<rect x="297" y="661" width="4" height="1"/>
<rect x="297" y="654" width="4" height="1"/>
<rect x="297" y="646" width="4" height="1"/>
<rect x="297" y="639" width="4" height="1"/>
<rect x="292" y="632" width="9" height="1"/>
<rect x="297" y="624" width="4" height="1"/>
<rect x="297" y="617" width="4" height="1"/>
<rect x="297" y="609" width="4" height="1"/>
<rect x="297" y="602" width="4" height="1"/>
<rect x="297" y="595" width="4" height="1"/>
<rect x="297" y="587" width="4" height="1"/>
<rect x="297" y="580" width="4" height="1"/>
<rect x="297" y="572" width="4" height="1"/>
<rect x="297" y="565" width="4" height="1"/>
<rect x="292" y="558" width="9" height="1"/>
<rect x="297" y="550" width="4" height="1"/>
<rect x="297" y="543" width="4" height="1"/>
<rect x="297" y="536" width="4" height="1"/>
<rect x="297" y="528" width="4" height="1"/>
<rect x="297" y="521" width="4" height="1"/>
<rect x="297" y="513" width="4" height="1"/>
<rect x="297" y="506" width="4" height="1"/>
<rect x="297" y="499" width="4" height="1"/>
<rect x="297" y="491" width="4" height="1"/>
<rect x="292" y="484" width="9" height="1"/>
<rect x="297" y="476" width="4" height="1"/>
<rect x="297" y="469" width="4" height="1"/>
<rect x="297" y="462" width="4" height="1"/>
<rect x="297" y="454" width="4" height="1"/>
<rect x="297" y="447" width="4" height="1"/>
<rect x="297" y="440" width="4" height="1"/>
<rect x="297" y="432" width="4" height="1"/>
<rect x="297" y="425" width="4" height="1"/>
<rect x="297" y="417" width="4" height="1"/>
<rect x="292" y="410" width="9" height="1"/>
<rect x="297" y="403" width="4" height="1"/>
<rect x="297" y="395" width="4" height="1"/>
<rect x="297" y="388" width="4" height="1"/>
<rect x="297" y="380" width="4" height="1"/>
<rect x="297" y="373" width="4" height="1"/>
<rect x="297" y="366" width="4" height="1"/>
<rect x="297" y="358" width="4" height="1"/>
<rect x="297" y="351" width="4" height="1"/>
<rect x="297" y="344" width="4" height="1"/>
<rect x="292" y="336" width="9" height="1"/>
<rect x="297" y="329" width="4" height="1"/>
<rect x="297" y="321" width="4" height="1"/>
<rect x="297" y="314" width="4" height="1"/>
<rect x="297" y="307" width="4" height="1"/>
<rect x="297" y="299" width="4" height="1"/>
<rect x="297" y="292" width="4" height="1"/>
<rect x="297" y="284" width="4" height="1"/>
<rect x="297" y="277" width="4" height="1"/>
<rect x="297" y="270" width="4" height="1"/>
<rect x="292" y="262" width="9" height="1"/>
<rect x="297" y="255" width="4" height="1"/>
<rect x="297" y="247" width="4" height="1"/>
<rect x="297" y="240" width="4" height="1"/>
<rect x="297" y="233" width="4" height="1"/>
<rect x="297" y="225" width="4" height="1"/>
<rect x="297" y="218" width="4" height="1"/>
<rect x="297" y="211" width="4" height="1"/>
<rect x="297" y="203" width="4" height="1"/>
<rect x="297" y="196" width="4" height="1"/>
<rect x="292" y="188" width="9" height="1"/>
<rect x="297" y="181" width="4" height="1"/>
<rect x="297" y="174" width="4" height="1"/>
<rect x="297" y="166" width="4" height="1"/>
<rect x="297" y="159" width="4" height="1"/>
<rect x="317" y="817" width="1" height="4"/>
<rect x="333" y="817" width="1" height="4"/>
<rect x="348" y="817" width="1" height="4"/>
<rect x="364" y="817" width="1" height="4"/>
<rect x="380" y="817" width="1" height="4"/>
<rect x="396" y="817" width="1" height="4"/>
<rect x="412" y="817" width="1" height="4"/>
<rect x="427" y="817" width="1" height="4"/>
<rect x="443" y="817" width="1" height="4"/>
<rect x="459" y="817" width="1" height="9"/>
<rect x="475" y="817" width="1" height="4"/>
<rect x="491" y="817" width="1" height="4"/>
<rect x="507" y="817" width="1" height="4"/>
<rect x="522" y="817" width="1" height="4"/>
<rect x="538" y="817" width="1" height="4"/>
<rect x="554" y="817" width="1" height="4"/>
<rect x="570" y="817" width="1" height="4"/>
<rect x="586" y="817" width="1" height="4"/>
<rect x="601" y="817" width="1" height="4"/>
<rect x="617" y="817" width="1" height="9"/>
<rect x="633" y="817" width="1" height="4"/>
<rect x="649" y="817" width="1" height="4"/>
<rect x="665" y="817" width="1" height="4"/>
<rect x="680" y="817" width="1" height="4"/>
<rect x="696" y="817" width="1" height="4"/>
<rect x="712" y="817" width="1" height="4"/>
<rect x="728" y="817" width="1" height="4"/>
<rect x="744" y="817" width="1" height="4"/>
<rect x="759" y="817" width="1" height="4"/>
<rect x="775" y="817" width="1" height="9"/>
<rect x="791" y="817" width="1" height="4"/>
<rect x="807" y="817" width="1" height="4"/>
<rect x="823" y="817" width="1" height="4"/>
<rect x="839" y="817" width="1" height="4"/>
<rect x="854" y="817" width="1" height="4"/>
<rect x="870" y="817" width="1" height="4"/>
<rect x="886" y="817" width="1" height="4"/>
<rect x="902" y="817" width="1" height="4"/>
<rect x="918" y="817" width="1" height="4"/>
<rect x="933" y="817" width="1" height="9"/>
<rect x="949" y="817" width="1" height="4"/>
<rect x="965" y="817" width="1" height="4"/>
<rect x="981" y="817" width="1" height="4"/>
<rect x="997" y="817" width="1" height="4"/>
<rect x="1012" y="817" width="1" height="4"/>
<rect x="1028" y="817" width="1" height="4"/>
<rect x="1044" y="817" width="1" height="4"/>
<rect x="1060" y="817" width="1" height="4"/>
<rect x="1076" y="817" width="1" height="4"/>
<rect x="1092" y="817" width="1" height="9"/>
<rect x="1107" y="817" width="1" height="4"/>
<rect x="1123" y="817" width="1" height="4"/>
<rect x="1139" y="817" width="1" height="4"/>
<rect x="1155" y="817" width="1" height="4"/>
<rect x="1171" y="817" width="1" height="4"/>
<rect x="1186" y="817" width="1" height="4"/>
<rect x="1202" y="817" width="1" height="4"/>
<rect x="1218" y="817" width="1" height="4"/>
<rect x="1234" y="817" width="1" height="4"/>
<rect x="1250" y="817" width="1" height="9"/>
<rect x="1265" y="817" width="1" height="4"/>
<rect x="1281" y="817" width="1" height="4"/>
<rect x="1297" y="817" width="1" height="4"/>
<rect x="1313" y="817" width="1" height="4"/>
<rect x="1329" y="817" width="1" height="4"/>
<rect x="1344" y="817" width="1" height="4"/>
<rect x="1360" y="817" width="1" height="4"/>
<rect x="1376" y="817" width="1" height="4"/>
<rect x="1392" y="817" width="1" height="4"/>
<rect x="1408" y="817" width="1" height="9"/>
<rect x="1424" y="817" width="1" height="4"/>
</g>
<g class="ax" font-size="15">
<text x="290" y="782.6" text-anchor="end" letter-spacing="1.5">−80</text>
<text x="290" y="708.7" text-anchor="end" letter-spacing="1.5">−60</text>
<text x="290" y="634.9" text-anchor="end" letter-spacing="1.5">−40</text>
<text x="290" y="561.0" text-anchor="end" letter-spacing="1.5">−20</text>
<text x="290" y="487.2" text-anchor="end" letter-spacing="1.5">0</text>
<text x="290" y="413.3" text-anchor="end" letter-spacing="1.5">20</text>
<text x="290" y="339.4" text-anchor="end" letter-spacing="1.5">40</text>
<text x="290" y="265.6" text-anchor="end" letter-spacing="1.5">60</text>
<text x="290" y="191.7" text-anchor="end" letter-spacing="1.5">80</text>
<text x="460.1" y="841" text-anchor="middle" letter-spacing="1.1">50</text>
<text x="618.2" y="841" text-anchor="middle" letter-spacing="1.1">100</text>
<text x="776.3" y="841" text-anchor="middle" letter-spacing="1.1">150</text>
<text x="934.4" y="841" text-anchor="middle" letter-spacing="1.1">200</text>
<text x="1092.5" y="841" text-anchor="middle" letter-spacing="1.1">250</text>
<text x="1250.6" y="841" text-anchor="middle" letter-spacing="1.1">300</text>
<text x="1408.7" y="841" text-anchor="middle" letter-spacing="1.1">350</text>
<text x="868.5" y="857" text-anchor="middle" letter-spacing="1.2">lon (degrees_east)</text>
<text transform="translate(246.6,483.7) rotate(-90)" x="0" y="0" text-anchor="middle" letter-spacing="1.2">lat (degrees_north)</text>
</g><g fill="#fff">
<ellipse cx="284.28" cy="778.00" rx="1.15" ry="1.6" transform="rotate(20 284.28 778.00)"/>
<ellipse cx="284.28" cy="704.10" rx="1.15" ry="1.6" transform="rotate(20 284.28 704.10)"/>
<ellipse cx="284.28" cy="630.30" rx="1.15" ry="1.6" transform="rotate(20 284.28 630.30)"/>
<ellipse cx="284.28" cy="556.40" rx="1.15" ry="1.6" transform="rotate(20 284.28 556.40)"/>
<ellipse cx="284.28" cy="482.60" rx="1.15" ry="1.6" transform="rotate(20 284.28 482.60)"/>
<ellipse cx="284.28" cy="408.70" rx="1.15" ry="1.6" transform="rotate(20 284.28 408.70)"/>
<ellipse cx="284.28" cy="334.80" rx="1.15" ry="1.6" transform="rotate(20 284.28 334.80)"/>
<ellipse cx="284.28" cy="261.00" rx="1.15" ry="1.6" transform="rotate(20 284.28 261.00)"/>
<ellipse cx="284.28" cy="187.10" rx="1.15" ry="1.6" transform="rotate(20 284.28 187.10)"/>
<ellipse cx="464.89" cy="836.40" rx="1.15" ry="1.6" transform="rotate(20 464.89 836.40)"/>
<ellipse cx="617.94" cy="836.40" rx="1.15" ry="1.6" transform="rotate(20 617.94 836.40)"/>
<ellipse cx="628.03" cy="836.40" rx="1.15" ry="1.6" transform="rotate(20 628.03 836.40)"/>
<ellipse cx="786.13" cy="836.40" rx="1.15" ry="1.6" transform="rotate(20 786.13 836.40)"/>
<ellipse cx="934.14" cy="836.40" rx="1.15" ry="1.6" transform="rotate(20 934.14 836.40)"/>
<ellipse cx="944.23" cy="836.40" rx="1.15" ry="1.6" transform="rotate(20 944.23 836.40)"/>
<ellipse cx="1102.33" cy="836.40" rx="1.15" ry="1.6" transform="rotate(20 1102.33 836.40)"/>
<ellipse cx="1250.34" cy="836.40" rx="1.15" ry="1.6" transform="rotate(20 1250.34 836.40)"/>
<ellipse cx="1260.43" cy="836.40" rx="1.15" ry="1.6" transform="rotate(20 1260.43 836.40)"/>
<ellipse cx="1418.53" cy="836.40" rx="1.15" ry="1.6" transform="rotate(20 1418.53 836.40)"/>
</g>
<g id="annot" style="white-space:pre">
  <text class="thin" x="75.5" y="149" font-size="27" textLength="185" lengthAdjust="spacingAndGlyphs">DB: sample.nc</text>
  <text class="thin" x="75.5" y="174.5" font-size="27" textLength="105.5" lengthAdjust="spacingAndGlyphs">Cycle: 0</text>
  <text x="236" y="174.5" font-size="27" textLength="61.2" lengthAdjust="spacingAndGlyphs" class="thin">Time</text>
  <rect x="299.6" y="162" width="1.6" height="2.6"/><rect x="299.6" y="172" width="1.6" height="2.6"/>
  <text x="303.5" y="174.5" font-size="27" textLength="59.5" lengthAdjust="spacingAndGlyphs" class="thinb">3653</text>
  <g font-size="10">
  <text x="76" y="201.5" textLength="73.5" lengthAdjust="spacingAndGlyphs">Pseudocolor</text>
  <text x="76" y="214.8" textLength="46.5" lengthAdjust="spacingAndGlyphs">Var: CO</text>
  <text x="76" y="227.7" textLength="83.5" lengthAdjust="spacingAndGlyphs">Units: mol/mol</text>
  </g>
  <rect x="76" y="237" width="60" height="141" fill="url(#cbar)"/>
  <g fill="#000">
  <rect x="136" y="237" width="15" height="1"/>
  <rect x="136" y="272" width="15" height="1"/>
  <rect x="136" y="307" width="15" height="1"/>
  <rect x="136" y="342" width="15" height="1"/>
  <rect x="136" y="378" width="15" height="1"/>
  </g>
  <g font-size="10">
  <text x="153.5" y="239.5" textLength="57" lengthAdjust="spacingAndGlyphs">2.751e-06</text>
  <text x="153.5" y="274.5" textLength="57" lengthAdjust="spacingAndGlyphs">2.065e-06</text>
  <text x="153.5" y="309.5" textLength="57" lengthAdjust="spacingAndGlyphs">1.379e-06</text>
  <text x="153.5" y="344.5" textLength="57" lengthAdjust="spacingAndGlyphs">6.931e-07</text>
  <text x="153.5" y="380.5" textLength="57" lengthAdjust="spacingAndGlyphs">7.009e-09</text>
  <text xml:space="preserve" x="76" y="392.7" textLength="90.5" lengthAdjust="spacingAndGlyphs">Max:  2.751e-06</text>
  <text xml:space="preserve" x="76" y="405.5" textLength="85.5" lengthAdjust="spacingAndGlyphs">Min:  7.009e-09</text>
  </g>
  <text class="thin" x="1133.5" y="896" font-size="27" textLength="117.5" lengthAdjust="spacingAndGlyphs">user: user</text>
  <text class="thin" xml:space="preserve" x="1134" y="923" font-size="26" textLength="292" lengthAdjust="spacingAndGlyphs">Tue Jan  5 11:40:06 2021</text>
</g>
</svg>
</body></html>
